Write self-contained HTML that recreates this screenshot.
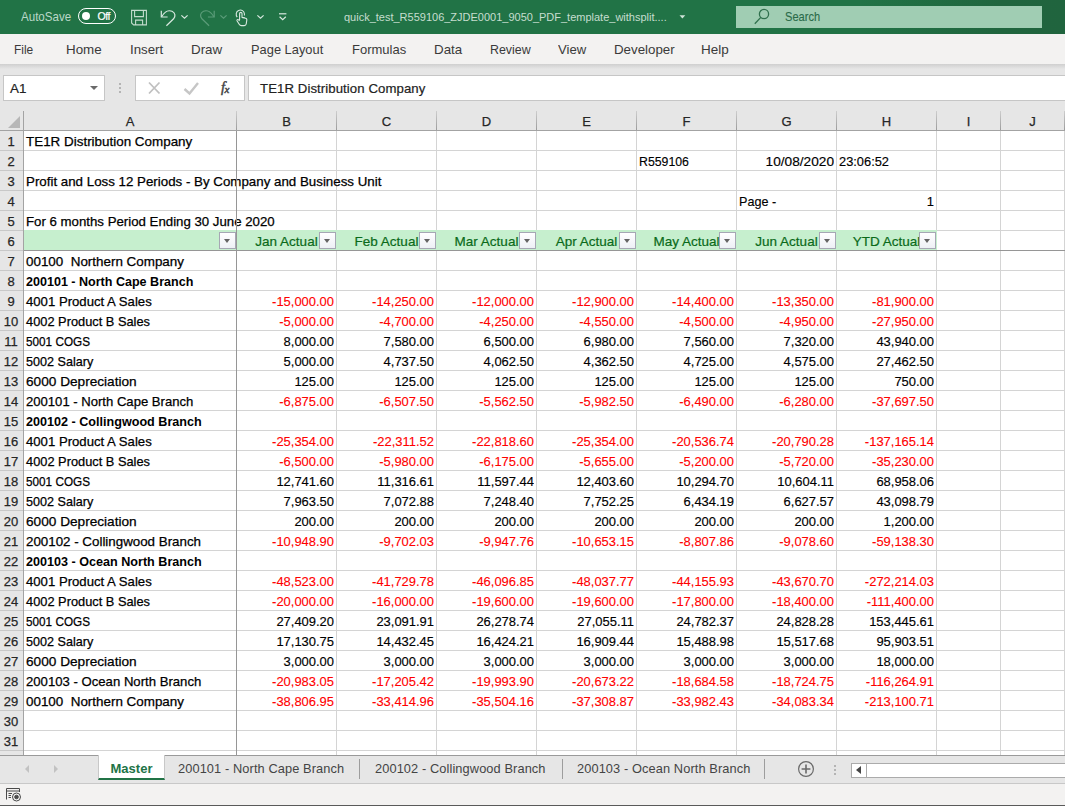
<!DOCTYPE html>
<html><head><meta charset="utf-8"><title>Excel</title>
<style>
*{box-sizing:border-box;margin:0;padding:0}
html,body{width:1065px;height:806px;overflow:hidden;background:#e6e6e6;font-family:"Liberation Sans",sans-serif;}
#app{position:relative;width:1065px;height:806px;overflow:hidden;background:#e6e6e6}
#title{position:absolute;left:0;top:0;width:1065px;height:34px;background:linear-gradient(90deg,#217346 0,#217346 860px,#20653e 1000px,#20643e 100%);color:#fff}
#title .t{position:absolute;top:0;height:34px;line-height:34px;font-size:11.8px;color:#c6decf;white-space:nowrap;transform-origin:0 50%}
#title svg{position:absolute;overflow:visible}
#toggle{position:absolute;left:78px;top:8px;width:38px;height:16px;border:1.4px solid #fff;border-radius:8px}
#toggle i{position:absolute;left:2.8px;top:2.6px;width:8px;height:8px;border-radius:4px;background:#fff}
#toggle b{position:absolute;left:18.5px;top:0;line-height:15.4px;font-size:10.6px;color:#fff;font-weight:normal;-webkit-text-stroke:.2px #fff;letter-spacing:-.5px}
#search{position:absolute;left:736px;top:6px;width:306px;height:22px;background:#a0cdb3;}
#search span{position:absolute;left:49px;top:0;line-height:22px;font-size:12.2px;color:#2a6b49;-webkit-text-stroke:.1px #2a6b49;transform:scaleX(.91);transform-origin:0 50%}
#menu{position:absolute;left:0;top:34px;width:1065px;height:30px;background:#f3f2f1}
#menu span{position:absolute;top:1px;line-height:30px;font-size:13.2px;color:#3a3a3a;white-space:nowrap;transform-origin:0 50%}
#shadow{position:absolute;left:0;top:64px;width:1065px;height:5px;background:linear-gradient(#cfcfcf,#e6e6e6)}
#namebox{position:absolute;left:3px;top:75px;width:102px;height:26px;background:#fff;border:1px solid #c6c6c6}
#namebox span{position:absolute;left:6px;top:1px;line-height:24px;font-size:13.4px;color:#222;-webkit-text-stroke:.2px #222}
#namebox i{position:absolute;left:86px;top:10px;width:0;height:0;border-left:4px solid transparent;border-right:4px solid transparent;border-top:4px solid #6a6a6a}
#dots3{position:absolute;left:119px;top:83px;width:2px;height:10px;background:linear-gradient(#b4b4b4 0 2px,transparent 2px 4px,#b4b4b4 4px 6px,transparent 6px 8px,#b4b4b4 8px 10px)}
#fxbox{position:absolute;left:135px;top:75px;width:110px;height:26px;background:#fff;border:1px solid #c6c6c6}
#fxbox svg{position:absolute;left:0;top:0}
#fxbox em{position:absolute;left:85px;top:0;line-height:23px;font-family:"Liberation Serif",serif;font-style:italic;font-size:14.5px;color:#444;-webkit-text-stroke:.45px #444;letter-spacing:-.6px}
#fxbox em sub{font-size:11px;vertical-align:baseline;position:relative;top:1px}
#fbar{position:absolute;left:248px;top:75px;width:820px;height:26px;background:#fff;border:1px solid #c6c6c6}
#fbar span{position:absolute;left:11px;top:1px;line-height:24px;font-size:13.2px;color:#222;white-space:nowrap;letter-spacing:.08px;-webkit-text-stroke:.2px #222}
#grid{position:absolute;left:0;top:0;width:1065px;height:755px;overflow:hidden}
#gridbg{position:absolute;left:24px;top:131px;width:1041px;height:624px;background:#fff}
.ch{position:absolute;top:111px;height:19px;line-height:21px;text-align:center;font-size:13px;color:#262626;-webkit-text-stroke:.25px #262626}
.chl{position:absolute;top:111px;width:1px;height:19px;background:linear-gradient(#cdcdcd,#9c9c9c)}
.rh{position:absolute;left:0;width:22px;height:19px;line-height:21px;text-align:center;font-size:13px;color:#262626;-webkit-text-stroke:.25px #262626}
.rhl{position:absolute;left:0;width:23px;height:1px;background:#c8c8c8}
.hl{position:absolute;left:24px;width:1041px;height:1px;background:#d4d4d4}
.vl{position:absolute;top:131px;width:1px;height:624px;background:#d4d4d4}
.green{position:absolute;left:24px;width:913px;height:20px;background:#c6efce}
.gh{position:absolute;height:19px;line-height:21px;text-align:center;font-size:13.5px;color:#0a6a1a;white-space:nowrap;overflow:hidden;-webkit-text-stroke:.2px #0a6a1a}
.fb{position:absolute;width:17px;height:17px;background:linear-gradient(#ffffff,#eef0f5);border:1px solid #a6a7b4;z-index:2}
.fb i{position:absolute;left:3.7px;top:6px;width:0;height:0;border-left:3.8px solid transparent;border-right:3.8px solid transparent;border-top:4px solid #636363}
.ca,.ct,.cn{position:absolute;height:19px;line-height:21px;font-size:13.2px;color:#000;white-space:nowrap;-webkit-text-stroke:.25px #000}
.ca{left:26px;transform-origin:0 50%}
.ct{transform-origin:0 50%;-webkit-text-stroke:.15px #000}
.cn{text-align:right;transform:scaleX(.982);transform-origin:100% 50%;-webkit-text-stroke:.15px #000}
.b{font-weight:bold;-webkit-text-stroke:0;letter-spacing:0}
.red{color:#ff0000;-webkit-text-stroke:.12px #ff0000}
.fzv{position:absolute;left:236px;top:131px;width:1px;height:624px;background:#969696}
.fzh{position:absolute;left:24px;top:250px;width:1041px;height:1px;background:#969696}
#hdrline{position:absolute;left:0;top:130px;width:1065px;height:1px;background:#a3a3a3}
#rhline{position:absolute;left:23px;top:111px;width:1px;height:644px;background:#a3a3a3}
#corner{position:absolute;left:8px;top:116px;width:0;height:0;border-left:12px solid transparent;border-bottom:12px solid #b7b7b7}
#tabs{position:absolute;left:0;top:755px;width:1065px;height:28px;background:#e6e6e6;border-top:1px solid #9a9a9a}
#tabs .tb{position:absolute;top:0;line-height:26px;font-size:12.8px;color:#444;white-space:nowrap;letter-spacing:.1px}
#tabs .sep{position:absolute;top:3px;width:1px;height:20px;background:#9d9d9d}
#master{position:absolute;left:98px;top:-1px;width:67px;height:25px;background:#fff;border-bottom:2px solid #217346;border-left:1px solid #c8c8c8;border-right:1px solid #c8c8c8}
#master span{position:absolute;left:0;width:65px;text-align:center;top:1px;line-height:26px;font-size:13px;font-weight:bold;color:#217346}
.nav{position:absolute;top:9px;width:0;height:0;border-top:4px solid transparent;border-bottom:4px solid transparent}
#hs{position:absolute;left:851px;top:7px;width:220px;height:15px;background:#fff;border:1px solid #ababab}
#hs b{position:absolute;left:0;top:0;width:15px;height:13px;border-right:1px solid #ababab}
#hs i{position:absolute;left:4px;top:2px;width:0;height:0;border-top:4.5px solid transparent;border-bottom:4.5px solid transparent;border-right:5px solid #444}
#tdots{position:absolute;left:834px;top:9px;width:2px;height:10px;background:linear-gradient(#b4b4b4 0 2px,transparent 2px 4px,#b4b4b4 4px 6px,transparent 6px 8px,#b4b4b4 8px 10px)}
#status{position:absolute;left:0;top:783px;width:1065px;height:23px;background:#f3f2f1;border-top:1px solid #c8c8c8}
#status svg{position:absolute;left:6px;top:4px}
#bot{position:absolute;left:0;top:805px;width:1065px;height:1px;background:#5a5a5a}
</style></head><body>
<div id="app">
<div id="title">
  <span class="t" style="left:21px;font-size:12.9px;color:#bad8c8;transform:scaleX(.898)">AutoSave</span>
  <div id="toggle"><i></i><b>Off</b></div>
  <!-- save -->
  <svg style="left:131px;top:9px" width="17" height="17" viewBox="0 0 17 17" fill="none" stroke="#c3dccd" stroke-width="1.1"><path d="M0.6 1.4H15.4V15.9H2.6L0.6 13.9Z"/><path d="M3.6 1.4V7.6H12.4V1.4"/><path d="M4.6 15.9V11.1H11.6V15.9"/></svg>
  <!-- undo -->
  <svg style="left:160px;top:9px" width="17" height="18" viewBox="0 0 17 18" fill="none" stroke="#d9e9e0" stroke-width="1.2"><path d="M1.3 1.8V8H7.6"/><path d="M1.6 7.8C4 3.5 8 0.6 12 2.2C15.6 3.8 15.6 7.6 13.6 9.8L6.4 16.8"/></svg>
  <svg style="left:181px;top:15px" width="7" height="4" viewBox="0 0 7 4" fill="none" stroke="#d9e9e0" stroke-width="1.2"><path d="M0.4 0.4L3.5 3.2L6.6 0.4"/></svg>
  <!-- redo dim -->
  <svg style="left:199px;top:9px" width="17" height="18" viewBox="0 0 17 18" fill="none" stroke="#5b9c79" stroke-width="1.2"><path d="M15.2 1.8V8H8.9"/><path d="M14.9 7.8C12.5 3.5 8.5 0.6 4.5 2.2C0.9 3.8 0.9 7.6 2.9 9.8L10.1 16.8"/></svg>
  <svg style="left:220px;top:15px" width="7" height="4" viewBox="0 0 7 4" fill="none" stroke="#5b9c79" stroke-width="1.2"><path d="M0.4 0.4L3.5 3.2L6.6 0.4"/></svg>
  <!-- touch -->
  <svg style="left:235px;top:9px" width="14" height="18" viewBox="0 0 14 18" fill="none" stroke="#d9e9e0" stroke-width="1.1"><path d="M2.2 8.2C0.6 6.2 0.8 2.6 3.6 1.4C6.4 0.2 9.2 2 9.4 4.8V6.6"/><path d="M4.6 11V4.6C4.6 3 7 3 7 4.6V8.4L10.6 9.2C11.6 9.4 12 10.2 11.8 11.2L11.2 15C11 16.2 10.2 16.6 9.2 16.6H6.4C5.4 16.6 4.8 16.2 4.2 15.2L2 11.8C1.6 10.8 2.8 10 3.6 10.8L4.6 12"/><path d="M7 8.6H9.6"/></svg>
  <svg style="left:257px;top:15px" width="7" height="4" viewBox="0 0 7 4" fill="none" stroke="#d9e9e0" stroke-width="1.2"><path d="M0.4 0.4L3.5 3.2L6.6 0.4"/></svg>
  <!-- customize -->
  <svg style="left:279px;top:13px" width="8" height="8" viewBox="0 0 8 8" fill="none" stroke="#d9e9e0" stroke-width="1.2"><path d="M0 0.8H7.4"/><path d="M0.6 3.8L3.7 6.6L6.8 3.8"/></svg>
  <span class="t" style="left:344px;transform:scaleX(.932)">quick_test_R559106_ZJDE0001_9050_PDF_template_withsplit....</span>
  <svg style="left:679px;top:15px" width="7" height="4" viewBox="0 0 7 4"><path d="M0.5 0.3H6.3L3.4 3.6Z" fill="#cfe3d8"/></svg>
  <div id="search"><svg style="left:18px;top:1px" width="18" height="20" viewBox="0 0 18 20" fill="none" stroke="#2f704d" stroke-width="1.3"><circle cx="10" cy="7" r="4.6"/><path d="M6.8 10.4L0.8 16.8"/></svg><span>Search</span></div>
</div>
<div id="menu">
  <span style="left:14.2px;transform:scaleX(0.904)">File</span><span style="left:66.2px;transform:scaleX(1.015)">Home</span><span style="left:129.7px;transform:scaleX(1.007)">Insert</span><span style="left:191.2px;transform:scaleX(1.014)">Draw</span><span style="left:250.7px;transform:scaleX(0.975)">Page Layout</span><span style="left:351.7px;transform:scaleX(0.986)">Formulas</span><span style="left:433.7px;transform:scaleX(1.012)">Data</span><span style="left:489.7px;transform:scaleX(0.941)">Review</span><span style="left:558.2px;transform:scaleX(0.994)">View</span><span style="left:613.7px;transform:scaleX(1.01)">Developer</span><span style="left:701.2px;transform:scaleX(1.021)">Help</span>
</div>
<div id="shadow"></div>
<div id="namebox"><span>A1</span><i></i></div>
<div id="dots3"></div>
<div id="fxbox">
 <svg width="108" height="24" viewBox="0 0 108 24" fill="none"><path d="M13 6.5L23.5 17.5M23.5 6.5L13 17.5" stroke="#c0c0c0" stroke-width="1.8"/><path d="M48.5 13L53.5 17.5L62 7" stroke="#c6c6c6" stroke-width="2.4"/></svg>
 <em>f<sub>x</sub></em>
</div>
<div id="fbar"><span>TE1R Distribution Company</span></div>
<div id="gridbg"></div>
<div id="grid">
<div class="ch" style="left:24px;width:212px">A</div>
<div class="chl" style="left:236px"></div>
<div class="ch" style="left:237px;width:99px">B</div>
<div class="chl" style="left:336px"></div>
<div class="ch" style="left:337px;width:99px">C</div>
<div class="chl" style="left:436px"></div>
<div class="ch" style="left:437px;width:99px">D</div>
<div class="chl" style="left:536px"></div>
<div class="ch" style="left:537px;width:99px">E</div>
<div class="chl" style="left:636px"></div>
<div class="ch" style="left:637px;width:99px">F</div>
<div class="chl" style="left:736px"></div>
<div class="ch" style="left:737px;width:99px">G</div>
<div class="chl" style="left:836px"></div>
<div class="ch" style="left:837px;width:99px">H</div>
<div class="chl" style="left:936px"></div>
<div class="ch" style="left:937px;width:63px">I</div>
<div class="chl" style="left:1000px"></div>
<div class="ch" style="left:1001px;width:63px">J</div>
<div class="chl" style="left:1064px"></div>
<div class="rh" style="top:131px">1</div>
<div class="rhl" style="top:150px"></div>
<div class="rh" style="top:151px">2</div>
<div class="rhl" style="top:170px"></div>
<div class="rh" style="top:171px">3</div>
<div class="rhl" style="top:190px"></div>
<div class="rh" style="top:191px">4</div>
<div class="rhl" style="top:210px"></div>
<div class="rh" style="top:211px">5</div>
<div class="rhl" style="top:230px"></div>
<div class="rh" style="top:231px">6</div>
<div class="rhl" style="top:250px"></div>
<div class="rh" style="top:251px">7</div>
<div class="rhl" style="top:270px"></div>
<div class="rh" style="top:271px">8</div>
<div class="rhl" style="top:290px"></div>
<div class="rh" style="top:291px">9</div>
<div class="rhl" style="top:310px"></div>
<div class="rh" style="top:311px">10</div>
<div class="rhl" style="top:330px"></div>
<div class="rh" style="top:331px">11</div>
<div class="rhl" style="top:350px"></div>
<div class="rh" style="top:351px">12</div>
<div class="rhl" style="top:370px"></div>
<div class="rh" style="top:371px">13</div>
<div class="rhl" style="top:390px"></div>
<div class="rh" style="top:391px">14</div>
<div class="rhl" style="top:410px"></div>
<div class="rh" style="top:411px">15</div>
<div class="rhl" style="top:430px"></div>
<div class="rh" style="top:431px">16</div>
<div class="rhl" style="top:450px"></div>
<div class="rh" style="top:451px">17</div>
<div class="rhl" style="top:470px"></div>
<div class="rh" style="top:471px">18</div>
<div class="rhl" style="top:490px"></div>
<div class="rh" style="top:491px">19</div>
<div class="rhl" style="top:510px"></div>
<div class="rh" style="top:511px">20</div>
<div class="rhl" style="top:530px"></div>
<div class="rh" style="top:531px">21</div>
<div class="rhl" style="top:550px"></div>
<div class="rh" style="top:551px">22</div>
<div class="rhl" style="top:570px"></div>
<div class="rh" style="top:571px">23</div>
<div class="rhl" style="top:590px"></div>
<div class="rh" style="top:591px">24</div>
<div class="rhl" style="top:610px"></div>
<div class="rh" style="top:611px">25</div>
<div class="rhl" style="top:630px"></div>
<div class="rh" style="top:631px">26</div>
<div class="rhl" style="top:650px"></div>
<div class="rh" style="top:651px">27</div>
<div class="rhl" style="top:670px"></div>
<div class="rh" style="top:671px">28</div>
<div class="rhl" style="top:690px"></div>
<div class="rh" style="top:691px">29</div>
<div class="rhl" style="top:710px"></div>
<div class="rh" style="top:711px">30</div>
<div class="rhl" style="top:730px"></div>
<div class="rh" style="top:731px">31</div>
<div class="rhl" style="top:750px"></div>
<div class="rh" style="top:751px">32</div>
<div class="rhl" style="top:770px"></div>
<div class="hl" style="top:150px"></div>
<div class="hl" style="top:170px"></div>
<div class="hl" style="top:190px"></div>
<div class="hl" style="top:210px"></div>
<div class="hl" style="top:230px"></div>
<div class="hl" style="top:250px"></div>
<div class="hl" style="top:270px"></div>
<div class="hl" style="top:290px"></div>
<div class="hl" style="top:310px"></div>
<div class="hl" style="top:330px"></div>
<div class="hl" style="top:350px"></div>
<div class="hl" style="top:370px"></div>
<div class="hl" style="top:390px"></div>
<div class="hl" style="top:410px"></div>
<div class="hl" style="top:430px"></div>
<div class="hl" style="top:450px"></div>
<div class="hl" style="top:470px"></div>
<div class="hl" style="top:490px"></div>
<div class="hl" style="top:510px"></div>
<div class="hl" style="top:530px"></div>
<div class="hl" style="top:550px"></div>
<div class="hl" style="top:570px"></div>
<div class="hl" style="top:590px"></div>
<div class="hl" style="top:610px"></div>
<div class="hl" style="top:630px"></div>
<div class="hl" style="top:650px"></div>
<div class="hl" style="top:670px"></div>
<div class="hl" style="top:690px"></div>
<div class="hl" style="top:710px"></div>
<div class="hl" style="top:730px"></div>
<div class="hl" style="top:750px"></div>
<div class="hl" style="top:770px"></div>
<div class="vl" style="left:236px"></div>
<div class="vl" style="left:336px"></div>
<div class="vl" style="left:436px"></div>
<div class="vl" style="left:536px"></div>
<div class="vl" style="left:636px"></div>
<div class="vl" style="left:736px"></div>
<div class="vl" style="left:836px"></div>
<div class="vl" style="left:936px"></div>
<div class="vl" style="left:1000px"></div>
<div class="vl" style="left:1064px"></div>
<div class="green" style="top:230px"></div>
<div class="fb" style="left:219px;top:232px"><i></i></div>
<div class="gh" style="left:237px;width:99px;top:231px">Jan Actual</div>
<div class="fb" style="left:319px;top:232px"><i></i></div>
<div class="gh" style="left:337px;width:99px;top:231px">Feb Actual</div>
<div class="fb" style="left:419px;top:232px"><i></i></div>
<div class="gh" style="left:437px;width:99px;top:231px">Mar Actual</div>
<div class="fb" style="left:519px;top:232px"><i></i></div>
<div class="gh" style="left:537px;width:99px;top:231px">Apr Actual</div>
<div class="fb" style="left:619px;top:232px"><i></i></div>
<div class="gh" style="left:637px;width:99px;top:231px">May Actual</div>
<div class="fb" style="left:719px;top:232px"><i></i></div>
<div class="gh" style="left:737px;width:99px;top:231px">Jun Actual</div>
<div class="fb" style="left:819px;top:232px"><i></i></div>
<div class="gh" style="left:837px;width:99px;top:231px">YTD Actual</div>
<div class="fb" style="left:919px;top:232px"><i></i></div>
<div class="ca" style="top:131px;transform:scaleX(1.0174)">TE1R Distribution Company</div>
<div class="ca" style="top:171px;transform:scaleX(1.0101)">Profit and Loss 12 Periods - By Company and Business Unit</div>
<div class="ca" style="top:211px;transform:scaleX(1.0036)">For 6 months Period Ending 30 June 2020</div>
<div class="ca" style="top:251px;transform:scaleX(1.0166)">00100&nbsp; Northern Company</div>
<div class="ca b" style="top:271px;transform:scaleX(0.9511)">200101 - North Cape Branch</div>
<div class="ca" style="top:291px;transform:scaleX(0.9968)">4001 Product A Sales</div>
<div class="cn red" style="left:237px;width:97px;top:291px">-15,000.00</div>
<div class="cn red" style="left:337px;width:97px;top:291px">-14,250.00</div>
<div class="cn red" style="left:437px;width:97px;top:291px">-12,000.00</div>
<div class="cn red" style="left:537px;width:97px;top:291px">-12,900.00</div>
<div class="cn red" style="left:637px;width:97px;top:291px">-14,400.00</div>
<div class="cn red" style="left:737px;width:97px;top:291px">-13,350.00</div>
<div class="cn red" style="left:837px;width:97px;top:291px">-81,900.00</div>
<div class="ca" style="top:311px;transform:scaleX(0.9721)">4002 Product B Sales</div>
<div class="cn red" style="left:237px;width:97px;top:311px">-5,000.00</div>
<div class="cn red" style="left:337px;width:97px;top:311px">-4,700.00</div>
<div class="cn red" style="left:437px;width:97px;top:311px">-4,250.00</div>
<div class="cn red" style="left:537px;width:97px;top:311px">-4,550.00</div>
<div class="cn red" style="left:637px;width:97px;top:311px">-4,500.00</div>
<div class="cn red" style="left:737px;width:97px;top:311px">-4,950.00</div>
<div class="cn red" style="left:837px;width:97px;top:311px">-27,950.00</div>
<div class="ca" style="top:331px;transform:scaleX(0.8908)">5001 COGS</div>
<div class="cn" style="left:237px;width:97px;top:331px">8,000.00</div>
<div class="cn" style="left:337px;width:97px;top:331px">7,580.00</div>
<div class="cn" style="left:437px;width:97px;top:331px">6,500.00</div>
<div class="cn" style="left:537px;width:97px;top:331px">6,980.00</div>
<div class="cn" style="left:637px;width:97px;top:331px">7,560.00</div>
<div class="cn" style="left:737px;width:97px;top:331px">7,320.00</div>
<div class="cn" style="left:837px;width:97px;top:331px">43,940.00</div>
<div class="ca" style="top:351px;transform:scaleX(0.9561)">5002 Salary</div>
<div class="cn" style="left:237px;width:97px;top:351px">5,000.00</div>
<div class="cn" style="left:337px;width:97px;top:351px">4,737.50</div>
<div class="cn" style="left:437px;width:97px;top:351px">4,062.50</div>
<div class="cn" style="left:537px;width:97px;top:351px">4,362.50</div>
<div class="cn" style="left:637px;width:97px;top:351px">4,725.00</div>
<div class="cn" style="left:737px;width:97px;top:351px">4,575.00</div>
<div class="cn" style="left:837px;width:97px;top:351px">27,462.50</div>
<div class="ca" style="top:371px;transform:scaleX(1.0341)">6000 Depreciation</div>
<div class="cn" style="left:237px;width:97px;top:371px">125.00</div>
<div class="cn" style="left:337px;width:97px;top:371px">125.00</div>
<div class="cn" style="left:437px;width:97px;top:371px">125.00</div>
<div class="cn" style="left:537px;width:97px;top:371px">125.00</div>
<div class="cn" style="left:637px;width:97px;top:371px">125.00</div>
<div class="cn" style="left:737px;width:97px;top:371px">125.00</div>
<div class="cn" style="left:837px;width:97px;top:371px">750.00</div>
<div class="ca" style="top:391px;transform:scaleX(0.9921)">200101 - North Cape Branch</div>
<div class="cn red" style="left:237px;width:97px;top:391px">-6,875.00</div>
<div class="cn red" style="left:337px;width:97px;top:391px">-6,507.50</div>
<div class="cn red" style="left:437px;width:97px;top:391px">-5,562.50</div>
<div class="cn red" style="left:537px;width:97px;top:391px">-5,982.50</div>
<div class="cn red" style="left:637px;width:97px;top:391px">-6,490.00</div>
<div class="cn red" style="left:737px;width:97px;top:391px">-6,280.00</div>
<div class="cn red" style="left:837px;width:97px;top:391px">-37,697.50</div>
<div class="ca b" style="top:411px;transform:scaleX(0.9552)">200102 - Collingwood Branch</div>
<div class="ca" style="top:431px;transform:scaleX(0.9968)">4001 Product A Sales</div>
<div class="cn red" style="left:237px;width:97px;top:431px">-25,354.00</div>
<div class="cn red" style="left:337px;width:97px;top:431px">-22,311.52</div>
<div class="cn red" style="left:437px;width:97px;top:431px">-22,818.60</div>
<div class="cn red" style="left:537px;width:97px;top:431px">-25,354.00</div>
<div class="cn red" style="left:637px;width:97px;top:431px">-20,536.74</div>
<div class="cn red" style="left:737px;width:97px;top:431px">-20,790.28</div>
<div class="cn red" style="left:837px;width:97px;top:431px">-137,165.14</div>
<div class="ca" style="top:451px;transform:scaleX(0.9721)">4002 Product B Sales</div>
<div class="cn red" style="left:237px;width:97px;top:451px">-6,500.00</div>
<div class="cn red" style="left:337px;width:97px;top:451px">-5,980.00</div>
<div class="cn red" style="left:437px;width:97px;top:451px">-6,175.00</div>
<div class="cn red" style="left:537px;width:97px;top:451px">-5,655.00</div>
<div class="cn red" style="left:637px;width:97px;top:451px">-5,200.00</div>
<div class="cn red" style="left:737px;width:97px;top:451px">-5,720.00</div>
<div class="cn red" style="left:837px;width:97px;top:451px">-35,230.00</div>
<div class="ca" style="top:471px;transform:scaleX(0.8908)">5001 COGS</div>
<div class="cn" style="left:237px;width:97px;top:471px">12,741.60</div>
<div class="cn" style="left:337px;width:97px;top:471px">11,316.61</div>
<div class="cn" style="left:437px;width:97px;top:471px">11,597.44</div>
<div class="cn" style="left:537px;width:97px;top:471px">12,403.60</div>
<div class="cn" style="left:637px;width:97px;top:471px">10,294.70</div>
<div class="cn" style="left:737px;width:97px;top:471px">10,604.11</div>
<div class="cn" style="left:837px;width:97px;top:471px">68,958.06</div>
<div class="ca" style="top:491px;transform:scaleX(0.9561)">5002 Salary</div>
<div class="cn" style="left:237px;width:97px;top:491px">7,963.50</div>
<div class="cn" style="left:337px;width:97px;top:491px">7,072.88</div>
<div class="cn" style="left:437px;width:97px;top:491px">7,248.40</div>
<div class="cn" style="left:537px;width:97px;top:491px">7,752.25</div>
<div class="cn" style="left:637px;width:97px;top:491px">6,434.19</div>
<div class="cn" style="left:737px;width:97px;top:491px">6,627.57</div>
<div class="cn" style="left:837px;width:97px;top:491px">43,098.79</div>
<div class="ca" style="top:511px;transform:scaleX(1.0341)">6000 Depreciation</div>
<div class="cn" style="left:237px;width:97px;top:511px">200.00</div>
<div class="cn" style="left:337px;width:97px;top:511px">200.00</div>
<div class="cn" style="left:437px;width:97px;top:511px">200.00</div>
<div class="cn" style="left:537px;width:97px;top:511px">200.00</div>
<div class="cn" style="left:637px;width:97px;top:511px">200.00</div>
<div class="cn" style="left:737px;width:97px;top:511px">200.00</div>
<div class="cn" style="left:837px;width:97px;top:511px">1,200.00</div>
<div class="ca" style="top:531px;transform:scaleX(1.0115)">200102 - Collingwood Branch</div>
<div class="cn red" style="left:237px;width:97px;top:531px">-10,948.90</div>
<div class="cn red" style="left:337px;width:97px;top:531px">-9,702.03</div>
<div class="cn red" style="left:437px;width:97px;top:531px">-9,947.76</div>
<div class="cn red" style="left:537px;width:97px;top:531px">-10,653.15</div>
<div class="cn red" style="left:637px;width:97px;top:531px">-8,807.86</div>
<div class="cn red" style="left:737px;width:97px;top:531px">-9,078.60</div>
<div class="cn red" style="left:837px;width:97px;top:531px">-59,138.30</div>
<div class="ca b" style="top:551px;transform:scaleX(0.9551)">200103 - Ocean North Branch</div>
<div class="ca" style="top:571px;transform:scaleX(0.9968)">4001 Product A Sales</div>
<div class="cn red" style="left:237px;width:97px;top:571px">-48,523.00</div>
<div class="cn red" style="left:337px;width:97px;top:571px">-41,729.78</div>
<div class="cn red" style="left:437px;width:97px;top:571px">-46,096.85</div>
<div class="cn red" style="left:537px;width:97px;top:571px">-48,037.77</div>
<div class="cn red" style="left:637px;width:97px;top:571px">-44,155.93</div>
<div class="cn red" style="left:737px;width:97px;top:571px">-43,670.70</div>
<div class="cn red" style="left:837px;width:97px;top:571px">-272,214.03</div>
<div class="ca" style="top:591px;transform:scaleX(0.9721)">4002 Product B Sales</div>
<div class="cn red" style="left:237px;width:97px;top:591px">-20,000.00</div>
<div class="cn red" style="left:337px;width:97px;top:591px">-16,000.00</div>
<div class="cn red" style="left:437px;width:97px;top:591px">-19,600.00</div>
<div class="cn red" style="left:537px;width:97px;top:591px">-19,600.00</div>
<div class="cn red" style="left:637px;width:97px;top:591px">-17,800.00</div>
<div class="cn red" style="left:737px;width:97px;top:591px">-18,400.00</div>
<div class="cn red" style="left:837px;width:97px;top:591px">-111,400.00</div>
<div class="ca" style="top:611px;transform:scaleX(0.8908)">5001 COGS</div>
<div class="cn" style="left:237px;width:97px;top:611px">27,409.20</div>
<div class="cn" style="left:337px;width:97px;top:611px">23,091.91</div>
<div class="cn" style="left:437px;width:97px;top:611px">26,278.74</div>
<div class="cn" style="left:537px;width:97px;top:611px">27,055.11</div>
<div class="cn" style="left:637px;width:97px;top:611px">24,782.37</div>
<div class="cn" style="left:737px;width:97px;top:611px">24,828.28</div>
<div class="cn" style="left:837px;width:97px;top:611px">153,445.61</div>
<div class="ca" style="top:631px;transform:scaleX(0.9561)">5002 Salary</div>
<div class="cn" style="left:237px;width:97px;top:631px">17,130.75</div>
<div class="cn" style="left:337px;width:97px;top:631px">14,432.45</div>
<div class="cn" style="left:437px;width:97px;top:631px">16,424.21</div>
<div class="cn" style="left:537px;width:97px;top:631px">16,909.44</div>
<div class="cn" style="left:637px;width:97px;top:631px">15,488.98</div>
<div class="cn" style="left:737px;width:97px;top:631px">15,517.68</div>
<div class="cn" style="left:837px;width:97px;top:631px">95,903.51</div>
<div class="ca" style="top:651px;transform:scaleX(1.0341)">6000 Depreciation</div>
<div class="cn" style="left:237px;width:97px;top:651px">3,000.00</div>
<div class="cn" style="left:337px;width:97px;top:651px">3,000.00</div>
<div class="cn" style="left:437px;width:97px;top:651px">3,000.00</div>
<div class="cn" style="left:537px;width:97px;top:651px">3,000.00</div>
<div class="cn" style="left:637px;width:97px;top:651px">3,000.00</div>
<div class="cn" style="left:737px;width:97px;top:651px">3,000.00</div>
<div class="cn" style="left:837px;width:97px;top:651px">18,000.00</div>
<div class="ca" style="top:671px;transform:scaleX(0.9963)">200103 - Ocean North Branch</div>
<div class="cn red" style="left:237px;width:97px;top:671px">-20,983.05</div>
<div class="cn red" style="left:337px;width:97px;top:671px">-17,205.42</div>
<div class="cn red" style="left:437px;width:97px;top:671px">-19,993.90</div>
<div class="cn red" style="left:537px;width:97px;top:671px">-20,673.22</div>
<div class="cn red" style="left:637px;width:97px;top:671px">-18,684.58</div>
<div class="cn red" style="left:737px;width:97px;top:671px">-18,724.75</div>
<div class="cn red" style="left:837px;width:97px;top:671px">-116,264.91</div>
<div class="ca" style="top:691px;transform:scaleX(1.0166)">00100&nbsp; Northern Company</div>
<div class="cn red" style="left:237px;width:97px;top:691px">-38,806.95</div>
<div class="cn red" style="left:337px;width:97px;top:691px">-33,414.96</div>
<div class="cn red" style="left:437px;width:97px;top:691px">-35,504.16</div>
<div class="cn red" style="left:537px;width:97px;top:691px">-37,308.87</div>
<div class="cn red" style="left:637px;width:97px;top:691px">-33,982.43</div>
<div class="cn red" style="left:737px;width:97px;top:691px">-34,083.34</div>
<div class="cn red" style="left:837px;width:97px;top:691px">-213,100.71</div>
<div class="ct" style="left:639px;top:151px;transform:scaleX(.933)">R559106</div>
<div class="cn" style="left:737px;width:97px;top:151px;transform:scaleX(1.036)">10/08/2020</div>
<div class="ct" style="left:839px;top:151px;transform:scaleX(.974)">23:06:52</div>
<div class="ct" style="left:739px;top:191px;transform:scaleX(.954)">Page -</div>
<div class="cn" style="left:837px;width:97px;top:191px">1</div>
<div class="fzv"></div><div class="fzh"></div>
</div>
<div id="hdrline"></div><div id="rhline"></div><div id="corner"></div>
<div id="tabs">
  <div class="nav" style="left:25px;border-right:4px solid #c2c2c2"></div>
  <div class="nav" style="left:54px;border-left:4px solid #c2c2c2"></div>
  <div id="master"><span>Master</span></div>
  <span class="tb" style="left:178px">200101 - North Cape Branch</span><div class="sep" style="left:359px"></div>
  <span class="tb" style="left:375px">200102 - Collingwood Branch</span><div class="sep" style="left:562px"></div>
  <span class="tb" style="left:577px">200103 - Ocean North Branch</span><div class="sep" style="left:764px"></div>
  <svg style="position:absolute;left:797px;top:4px" width="18" height="18" viewBox="0 0 18 18" fill="none" stroke="#6a6a6a"><circle cx="9" cy="9" r="7.4" stroke-width="1.2"/><path d="M9 4.6V13.4M4.6 9H13.4" stroke-width="1.6"/></svg>
  <div id="tdots"></div>
  <div id="hs"><b><i></i></b></div>
</div>
<div id="status"><svg width="16" height="14" viewBox="0 0 16 14" fill="none" stroke="#4a4a4a" stroke-width="1"><path d="M0.5 11.5V0.5H13.5V4"/><path d="M0.5 3H13.5"/><path d="M2.5 5.5H6M2.5 7.5H5M2.5 9.5H5"/><circle cx="10.5" cy="9" r="4"/><circle cx="10.5" cy="9" r="1.8" fill="#4a4a4a"/></svg></div>
<div id="bot"></div>
</div>
</body></html>
